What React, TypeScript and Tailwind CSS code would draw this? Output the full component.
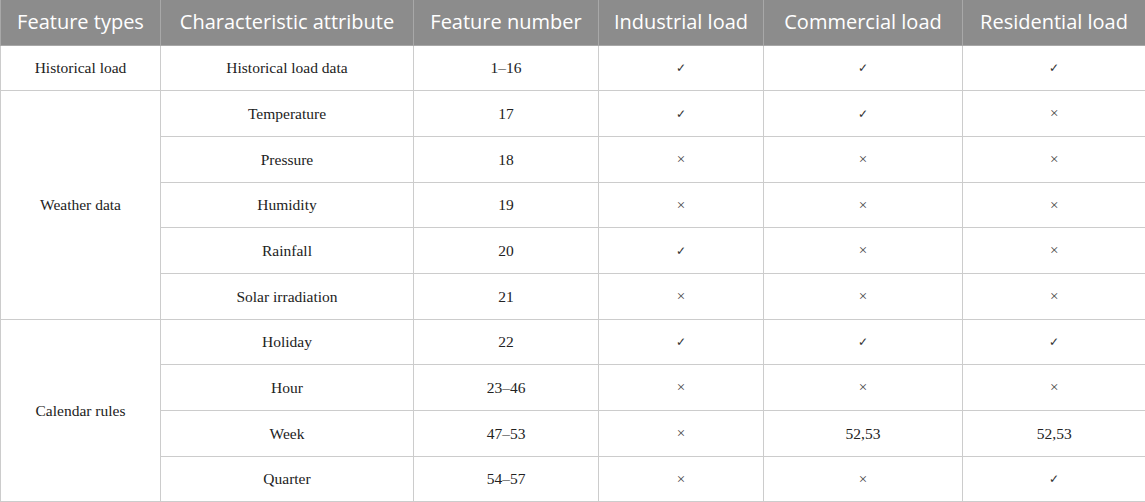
const rows: { group?: string; span?: number; attr: string; num: string; ind: string; com: string; res: string }[] = [
  { group: "Historical load", span: 1, attr: "Historical load data", num: "1–16", ind: "✓", com: "✓", res: "✓" },
  { group: "Weather data", span: 5, attr: "Temperature", num: "17", ind: "✓", com: "✓", res: "×" },
  { attr: "Pressure", num: "18", ind: "×", com: "×", res: "×" },
  { attr: "Humidity", num: "19", ind: "×", com: "×", res: "×" },
  { attr: "Rainfall", num: "20", ind: "✓", com: "×", res: "×" },
  { attr: "Solar irradiation", num: "21", ind: "×", com: "×", res: "×" },
  { group: "Calendar rules", span: 4, attr: "Holiday", num: "22", ind: "✓", com: "✓", res: "✓" },
  { attr: "Hour", num: "23–46", ind: "×", com: "×", res: "×" },
  { attr: "Week", num: "47–53", ind: "×", com: "52,53", res: "52,53" },
  { attr: "Quarter", num: "54–57", ind: "×", com: "×", res: "✓" },
];

const headers = ["Feature types", "Characteristic attribute", "Feature number", "Industrial load", "Commercial load", "Residential load"];
const widths = ["w-[160px]", "w-[253px]", "w-[185px]", "w-[165px]", "w-[199px]", "w-[183px]"];

// thin tick / cross like the reference, values stay serif
const markCls = (v: string) =>
  v === "✓"
    ? "text-[12px] font-extralight text-[#333] [font-family:'DejaVu_Sans',sans-serif]"
    : v === "×"
    ? "text-[15px] text-[#444]"
    : "";

export default function App() {
  return (
    <div className="w-[1145px] h-[502px] overflow-hidden bg-white">
      <table className="w-[1145px] table-fixed border-collapse text-center">
        <colgroup>
          {widths.map((w, i) => (
            <col key={i} className={w} />
          ))}
        </colgroup>
        <thead>
          <tr className="h-[45px] bg-[#8c8c8c]">
            {headers.map((h) => (
              <th
                key={h}
                className="border border-[#a8a8a8] border-t-0 px-1 font-normal text-white text-[20px] whitespace-nowrap [font-family:'Open_Sans',sans-serif]"
              >
                {h}
              </th>
            ))}
          </tr>
        </thead>
        <tbody className="text-[#222] text-[15.5px] [font-family:'Liberation_Serif',serif]">
          {rows.map((r, i) => (
            <tr key={i} className="h-[45.7px]">
              {r.group && (
                <td rowSpan={r.span} className="border border-[#cccccc]">
                  {r.group}
                </td>
              )}
              <td className="border border-[#cccccc]">{r.attr}</td>
              <td className="border border-[#cccccc]">{r.num}</td>
              <td className={`border border-[#cccccc] ${markCls(r.ind)}`}>{r.ind}</td>
              <td className={`border border-[#cccccc] ${markCls(r.com)}`}>{r.com}</td>
              <td className={`border border-[#cccccc] border-r-0 ${markCls(r.res)}`}>{r.res}</td>
            </tr>
          ))}
        </tbody>
      </table>
    </div>
  );
}
